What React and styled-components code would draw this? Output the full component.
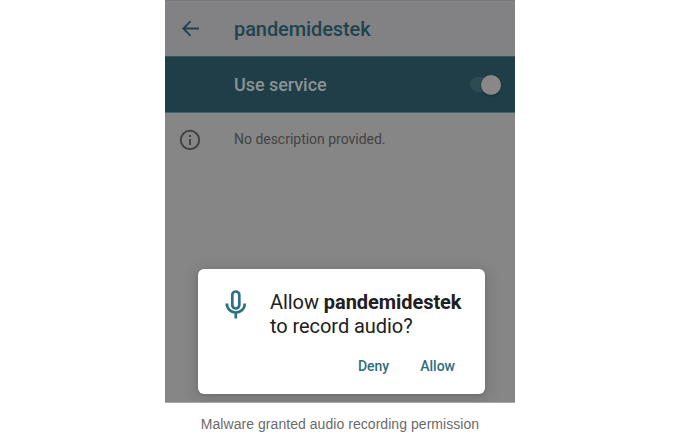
import React from "react";
import styled, { createGlobalStyle } from "styled-components";

const GlobalStyle = createGlobalStyle`
  * { box-sizing: border-box; }
  body { margin: 0; background: #fff; overflow: hidden; }
`;

const Figure = styled.figure`
  margin: 0;
  height: 434px;
  display: flex;
  flex-direction: column;
  align-items: center;
  font-family: Roboto, sans-serif;
`;

const Screen = styled.div`
  position: relative;
  width: 350px;
  height: 404px;
  background: #868686;
  border-bottom: 1px solid #a9a9a9;
  overflow: hidden;
`;

const Row = styled.div`
  display: grid;
  grid-template-columns: 69px 1fr auto;
  align-items: center;
`;

const AppBar = styled(Row)`
  height: 56px;
  background: #828285;
  border-top: 1px solid #78787b;
  color: #1d444d;
`;

const ServiceBar = styled(Row)`
  height: 57px;
  background: #1f3e47;
  border-top: 1px solid #39545d;
  border-bottom: 1px solid #45636d;
  color: #8c9395;
  padding-right: 14px;
`;

const InfoRow = styled(Row)`
  height: 54px;
  color: #434343;
`;

const IconSlot = styled.div`
  display: flex;
  padding-left: ${(p) => p.$inset}px;
`;

const Title = styled.h1`
  margin: 0;
  padding-top: 1px;
  font-size: 20px;
  font-weight: 500;
  letter-spacing: -0.09px;
  line-height: 24px;
`;

const ServiceLabel = styled.span`
  padding-top: 1px;
  font-size: 18px;
  font-weight: 500;
  letter-spacing: -0.05px;
  line-height: 22px;
`;

const Description = styled.span`
  font-size: 14px;
  line-height: 18px;
  letter-spacing: -0.02px;
  padding-bottom: 3px;
`;

const Track = styled.div`
  width: 31px;
  height: 15px;
  border-radius: 8px;
  background: #2c4b53;
  display: flex;
  align-items: center;
  justify-content: flex-end;
`;

const Thumb = styled.div`
  width: 20px;
  height: 20px;
  flex: none;
  border-radius: 50%;
  background: #898787;
  box-shadow: 0 1px 2px rgba(0, 0, 0, 0.3);
`;

const Dialog = styled.section`
  position: absolute;
  left: 33px;
  top: 269px;
  width: 287px;
  height: 125px;
  border-radius: 6px;
  background: #fff;
  box-shadow: 0 3px 14px 3px rgba(0, 0, 0, 0.12), 0 1px 3px rgba(0, 0, 0, 0.12);
  display: flex;
  flex-direction: column;
`;

const Prompt = styled.div`
  display: grid;
  grid-template-columns: 72px 1fr;
  padding-top: 20px;
`;

const Message = styled.p`
  margin: 0;
  padding-top: 1px;
  font-size: 20px;
  line-height: 24px;
  letter-spacing: -0.06px;
  color: #202020;
  white-space: nowrap;
`;

const AppName = styled.strong`
  font-weight: 700;
`;

const Actions = styled.div`
  display: flex;
  justify-content: flex-end;
  gap: 31px;
  padding: 19px 30px 0 0;
`;

const Action = styled.button`
  border: 0;
  padding: 0;
  background: none;
  color: #2d6e7e;
  font: 500 14px/18px Roboto, sans-serif;
`;

const Caption = styled.figcaption`
  padding-top: 11px;
  font-family: "Liberation Sans", sans-serif;
  font-size: 14px;
  letter-spacing: 0.05px;
  line-height: 20px;
  color: #6b6b6b;
`;

const BackIcon = () => (
  <svg width="18" height="17" viewBox="0 0 18 17" fill="none" stroke="currentColor" strokeWidth="1.8">
    <path d="M17 8.5H1.8M8.6 1.2 1.3 8.5 8.6 15.8" />
  </svg>
);

const InfoIcon = () => (
  <svg width="22" height="22" viewBox="0 0 22 22" fill="none" stroke="currentColor" strokeWidth="2">
    <circle cx="11" cy="11" r="9.2" />
    <path d="M11 10v6M11 6v2" />
  </svg>
);

const MicIcon = () => (
  <svg width="22" height="30" viewBox="0 0 22 30" fill="none" stroke="#2f7080" strokeWidth="2.7">
    <rect x="7.3" y="2.5" width="7" height="17" rx="3.5" />
    <path d="M1.8 14.6c0 5.2 4 9 9 9s9-3.8 9-9M10.8 23v6.4" />
  </svg>
);

export default function App() {
  return (
    <>
      <GlobalStyle />
      <Figure>
        <Screen>
          <AppBar>
            <IconSlot $inset={17}><BackIcon /></IconSlot>
            <Title>pandemidestek</Title>
          </AppBar>
          <ServiceBar>
            <IconSlot $inset={0} />
            <ServiceLabel>Use service</ServiceLabel>
            <Track><Thumb /></Track>
          </ServiceBar>
          <InfoRow>
            <IconSlot $inset={14}><InfoIcon /></IconSlot>
            <Description>No description provided.</Description>
          </InfoRow>
          <Dialog>
            <Prompt>
              <IconSlot $inset={27}><MicIcon /></IconSlot>
              <Message>
                Allow <AppName>pandemidestek</AppName>
                <br />
                to record audio?
              </Message>
            </Prompt>
            <Actions>
              <Action>Deny</Action>
              <Action>Allow</Action>
            </Actions>
          </Dialog>
        </Screen>
        <Caption>Malware granted audio recording permission</Caption>
      </Figure>
    </>
  );
}
